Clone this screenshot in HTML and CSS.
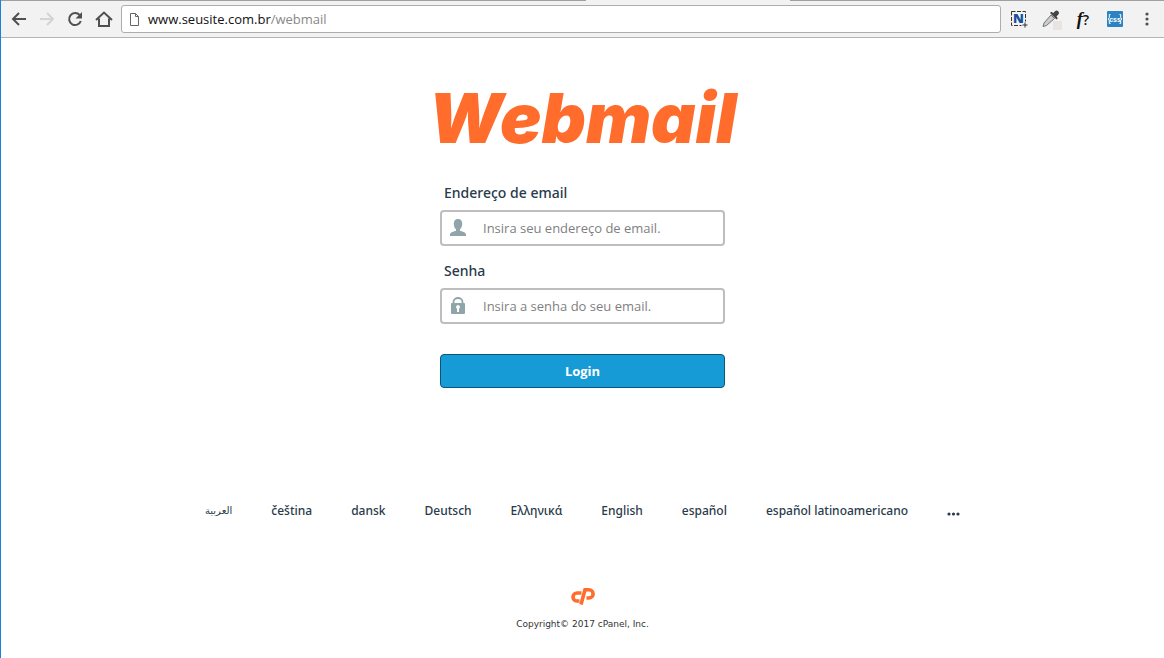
FILE: index.html
```html
<!DOCTYPE html>
<html lang="pt-BR">
<head>
    <meta charset="UTF-8">
    <meta name="viewport" content="width=device-width, initial-scale=1.0">
    <title>Webmail Login</title>
    <link rel="stylesheet" href="styles.css">
</head>
<body>
    <div class="toolbar">
        <div class="active-tab"></div>
        <div class="nav-buttons">
            <button type="button" class="tool-btn" aria-label="Voltar">
                <svg width="16" height="16" viewBox="0 0 16 16" fill="none" stroke="#505050" stroke-width="2"><path d="M15 8H2M8 2L2 8l6 6"/></svg>
            </button>
            <button type="button" class="tool-btn" aria-label="Avançar">
                <svg width="16" height="16" viewBox="0 0 16 16" fill="none" stroke="#d4d4d4" stroke-width="2"><path d="M1 8h13M8 2l6 6-6 6"/></svg>
            </button>
            <button type="button" class="tool-btn" aria-label="Recarregar">
                <svg width="16" height="16" viewBox="0 0 16 16"><path d="M12.6 4A6 6 0 1 0 13.8 10" fill="none" stroke="#505050" stroke-width="2"/><path d="M15 1v6.500H8.500z" fill="#505050"/></svg>
            </button>
            <button type="button" class="tool-btn" aria-label="Página inicial">
                <svg width="18" height="16" viewBox="0 0 18 16" fill="none" stroke="#505050" stroke-width="2"><path d="M1 9L9 1.500 17 9M4 7.500V15h10V7.500"/></svg>
            </button>
        </div>
        <div class="address">
            <svg width="10" height="13" viewBox="0 0 10 13" fill="none" stroke="#666"><path d="M.5.5h5l3 3v9h-8zM5.500.5v3h3"/></svg>
            <span class="url">www.seusite.com.br<span class="url-path">/webmail</span></span>
        </div>
        <div class="extensions">
            <button type="button" class="tool-btn ext-n" aria-label="Capturar">
                <svg width="18" height="18" viewBox="0 0 18 18">
                    <path d="M1.500 1.500h14v10M1.500 1.500v14h10" fill="none" stroke="#333" stroke-dasharray="4 1.500"/>
                    <path d="M15 12.500v5M12.500 15h5" stroke="#333"/>
                    <text x="8.500" y="13" text-anchor="middle">N</text>
                </svg>
            </button>
            <button type="button" class="tool-btn" aria-label="Conta-gotas">
                <svg width="22" height="22" viewBox="0 0 22 22">
                    <path d="M13 13h9v9h-9z" fill="#e9e4e2"/>
                    <path d="M11 7l3.500 3.500-8 7-3.500 1 1-3.500z" fill="#ccc" stroke="#777"/>
                    <path d="M10 5l6.500 6.500 1.300-1.300-1.300-1.800 1.800-1.800a2.300 2.300 0 0 0-3.300-3.300l-1.800 1.800-1.900-1.400z" fill="#444"/>
                </svg>
            </button>
            <button type="button" class="tool-btn ext-font" aria-label="Identificar fonte"><i>f</i>?</button>
            <button type="button" class="tool-btn ext-css" aria-label="Inspecionar CSS">
                <svg width="16" height="16" viewBox="0 0 16 16">
                    <rect width="16" height="16" rx="1" fill="#2d83c2"/>
                    <path d="M3.500 3.500H2.300v3L1.300 8l1 1.500v3h1.200M12.500 3.500h1.200v3l1 1.500-1 1.500v3h-1.200" fill="none" stroke="#fff"/>
                    <text x="8" y="10.500" text-anchor="middle">css</text>
                </svg>
            </button>
            <button type="button" class="tool-btn" aria-label="Menu">
                <svg width="4" height="14" viewBox="0 0 4 14" fill="#505050"><circle cx="2" cy="2" r="1.600"/><circle cx="2" cy="7" r="1.600"/><circle cx="2" cy="12" r="1.600"/></svg>
            </button>
        </div>
    </div>

    <main class="login">
        <h1 class="brand">Webmail</h1>

        <form class="login-form">
            <label for="user">Endereço de email</label>
            <div class="field">
                <svg width="16" height="18" viewBox="0 0 16 18" fill="#8fa5aa"><path d="M8 0c3 0 4.400 2 4.200 5-.1 2.400-1 4.300-2.200 5.300v1.500c2 .9 6 1.200 6 4V17H0v-1.200c0-2.800 4-3.100 6-4v-1.500C4.800 9.300 3.900 7.400 3.800 5 3.600 2 5 0 8 0z"/></svg>
                <input type="text" id="user" name="user" placeholder="Insira seu endereço de email.">
            </div>

            <label for="pass">Senha</label>
            <div class="field">
                <svg width="16" height="18" viewBox="0 0 16 18"><path d="M3.500 8V5a4.500 4 0 0 1 9 0v3" fill="none" stroke="#8fa5aa" stroke-width="1.800"/><rect x="1" y="6" width="14" height="11" rx="1" fill="#8fa5aa"/><path d="M8 8a2 2 0 0 0-1 3.700V15h2v-3.300A2 2 0 0 0 8 8z" fill="#fff"/></svg>
                <input type="password" id="pass" name="pass" placeholder="Insira a senha do seu email.">
            </div>

            <button type="submit" class="btn">Login</button>
        </form>
    </main>

    <nav class="locales">
        <a href="#" lang="ar" class="arabic">العربية</a>
        <a href="#">čeština</a>
        <a href="#">dansk</a>
        <a href="#">Deutsch</a>
        <a href="#">Ελληνικά</a>
        <a href="#">English</a>
        <a href="#">español</a>
        <a href="#">español latinoamericano</a>
        <a href="#" class="more" aria-label="Mais idiomas">
            <svg width="13" height="4" viewBox="0 0 13 4" fill="#293a4a"><circle cx="2" cy="2" r="1.600"/><circle cx="6.500" cy="2" r="1.600"/><circle cx="11" cy="2" r="1.600"/></svg>
        </a>
    </nav>

    <footer class="copyright">
        <svg width="24" height="18" viewBox="0 0 24 18" fill="none" stroke="#ff6c2c" stroke-width="3.600"><path d="M10.500 6H6.200a4 4 0 0 0-.4 8H8.500"/><path d="M10 17.500L14 2.800h4a3.800 3.800 0 0 1 0 8.200h-2.500"/></svg>
        <p>Copyright© 2017 cPanel, Inc.</p>
    </footer>
</body>
</html>
```
FILE: styles.css
```css
* {
    margin: 0;
    padding: 0;
    box-sizing: border-box;
}

body {
    background-color: #fff;
    border-left: 1px solid #1883d7;
    color: #293a4a;
    font-family: 'Open Sans', 'DejaVu Sans', sans-serif;
    font-size: 13px;
    min-height: 100vh;
}

/* Browser bar */
.toolbar {
    position: relative;
    display: flex;
    align-items: center;
    height: 38px;
    padding: 0 8px 0 10px;
    background-color: #f2f2f2;
    border-top: 1px solid #a0a0a0;
    border-bottom: 1px solid #b4b4b4;
}

.active-tab {
    position: absolute;
    top: -1px;
    left: 50.3%;
    width: 204px;
    height: 1px;
    background-color: #f2f2f2;
}

.nav-buttons,
.extensions {
    display: flex;
    align-items: center;
}

.nav-buttons {
    gap: 12px;
}

.tool-btn {
    display: flex;
    align-items: center;
    justify-content: center;
    background: none;
    border: none;
    color: #111;
}

.address {
    flex: 1;
    display: flex;
    align-items: center;
    gap: 8px;
    height: 28px;
    margin: 0 9px 0 8px;
    padding: 0 8px;
    background-color: #fff;
    border: 1px solid #adadad;
    border-radius: 3px;
}

.url {
    color: #111;
}

.url-path {
    color: #888;
}

.extensions {
    gap: 14px;
}

.extensions .tool-btn {
    width: 18px;
}

.extensions svg {
    flex-shrink: 0;
}

.ext-n text {
    font: 800 13px 'Open Sans', sans-serif;
    fill: #164fa0;
}

.ext-font {
    font: 600 14px 'Open Sans', sans-serif;
}

.ext-font i {
    font: italic bold 18px 'Liberation Serif', serif;
}

.ext-css text {
    font: bold 7px 'Liberation Sans', sans-serif;
    fill: #fff;
}

/* Login */
.login {
    display: flex;
    flex-direction: column;
    align-items: center;
    padding-top: 40px;
}

.brand {
    color: #ff6c2c;
    font: italic 900 69px/80px Inter, sans-serif;
}

.login-form {
    width: 285px;
    max-width: 90%;
    margin-top: 24px;
}

.login-form label {
    display: block;
    padding-left: 4px;
    font-family: 'Noto Sans', sans-serif;
    font-size: 14px;
    font-weight: 500;
    line-height: 22px;
}

.field {
    display: flex;
    align-items: center;
    height: 36px;
    margin: 6px 0 14px;
    padding-left: 8px;
    border: 2px solid #bebebe;
    border-radius: 4px;
}

.field input {
    flex: 1;
    min-width: 0;
    height: 32px;
    padding-left: 17px;
    background: none;
    border: none;
    outline: none;
    color: #293a4a;
    font: 13px 'Open Sans', sans-serif;
}

.field input::placeholder {
    color: #7f7f7f;
}

.btn {
    width: 100%;
    height: 34px;
    margin-top: 16px;
    background-color: #179bd7;
    border: 1px solid #095779;
    border-radius: 4px;
    color: #fff;
    cursor: pointer;
    font: bold 13px 'Open Sans', sans-serif;
}

/* Languages */
.locales {
    display: flex;
    flex-wrap: wrap;
    align-items: center;
    justify-content: center;
    gap: 39px;
    padding-top: 112px;
}

.locales a {
    color: #293a4a;
    font-family: 'Noto Sans', sans-serif;
    font-size: 12px;
    font-weight: 500;
    line-height: 22px;
    text-decoration: none;
}

.locales .arabic {
    font-family: 'DejaVu Sans', sans-serif;
    font-size: 10px;
}

.locales .more {
    display: flex;
    padding-top: 6px;
}

.copyright {
    padding: 65px 0 24px;
    text-align: center;
    font: 9px/14px 'DejaVu Sans', sans-serif;
    color: #333;
}

.copyright svg {
    display: block;
    margin: 0 auto 12px;
}
```
